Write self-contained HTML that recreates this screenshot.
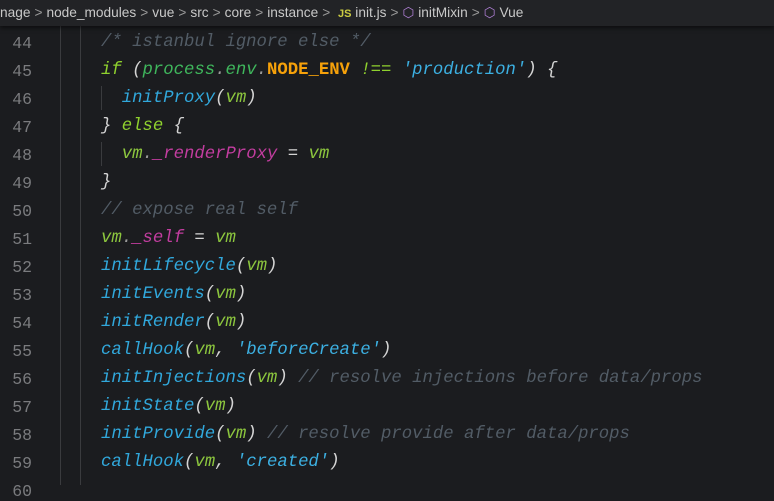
<!DOCTYPE html><html><head><style>
html,body{margin:0;width:774px;height:485px;background:#1b1c1f;overflow:hidden;font-family:"Liberation Mono",monospace;}
.bc{position:absolute;left:0;top:0;width:774px;height:26px;background:#222326;box-shadow:0 2px 4px #0008;font-family:"Liberation Sans",sans-serif;font-size:13.7px;color:#c8c8c8;line-height:26px;white-space:nowrap;z-index:2}
.bc .s{color:#999;margin:0 4px}
.ln{position:absolute;left:0;width:32px;text-align:right;color:#7a7b7e;font-size:16.5px}
.code{position:absolute;left:101px;font-size:17.3px;font-style:italic;white-space:pre;color:#d4d4d4}
.g{position:absolute;width:1px;background:#3a3b3e}
.f{color:#31a8dc}.v{color:#8cc63e}.p{color:#3fb65c}.o{color:#f6a10a;font-weight:bold;font-style:normal}.st{color:#3cb0e2}.k{color:#8fd12e}.c{color:#525c66}.m{color:#c23d9f}.d{color:#9a9a9a}
</style></head><body>
<div class="bc">nage<span class="s">&gt;</span>node_modules<span class="s">&gt;</span>vue<span class="s">&gt;</span>src<span class="s">&gt;</span>core<span class="s">&gt;</span>instance<span class="s">&gt;</span> <b style="color:#cbcb41;font-size:11px">JS</b> init.js<span class="s">&gt;</span><span style="color:#b180d7">⬡</span> initMixin<span class="s">&gt;</span><span style="color:#b180d7">⬡</span> Vue</div>
<div class="g" style="left:60px;top:26px;height:459px"></div>
<div class="g" style="left:80px;top:26px;height:459px"></div>
<div class="g" style="left:101px;top:86px;height:24px"></div>
<div class="g" style="left:101px;top:142px;height:24px"></div>
<div id="L"></div>
<script>
var lines=[
'<span class="c">/* istanbul ignore else */</span>',
'<span class="k">if</span> (<span class="p">process</span><span class="d">.</span><span class="p">env</span><span class="d">.</span><span class="o">NODE_ENV</span> <span class="k">!==</span> <span class="st">\'production\'</span>) {',
'  <span class="f">initProxy</span>(<span class="v">vm</span>)',
'} <span class="k">else</span> {',
'  <span class="v">vm</span><span class="d">.</span><span class="m">_renderProxy</span> = <span class="v">vm</span>',
'}',
'<span class="c">// expose real self</span>',
'<span class="v">vm</span><span class="d">.</span><span class="m">_self</span> = <span class="v">vm</span>',
'<span class="f">initLifecycle</span>(<span class="v">vm</span>)',
'<span class="f">initEvents</span>(<span class="v">vm</span>)',
'<span class="f">initRender</span>(<span class="v">vm</span>)',
'<span class="f">callHook</span>(<span class="v">vm</span>, <span class="st">\'beforeCreate\'</span>)',
'<span class="f">initInjections</span>(<span class="v">vm</span>) <span class="c">// resolve injections before data/props</span>',
'<span class="f">initState</span>(<span class="v">vm</span>)',
'<span class="f">initProvide</span>(<span class="v">vm</span>) <span class="c">// resolve provide after data/props</span>',
'<span class="f">callHook</span>(<span class="v">vm</span>, <span class="st">\'created\'</span>)',''];
var h='';for(var i=0;i<lines.length;i++){var t=33+i*28;h+='<div class="ln" style="top:'+(t+1)+'px">'+(44+i)+'</div><div class="code" style="top:'+t+'px">'+lines[i]+'</div>';}
document.getElementById('L').innerHTML=h;
</script>
</body></html>
